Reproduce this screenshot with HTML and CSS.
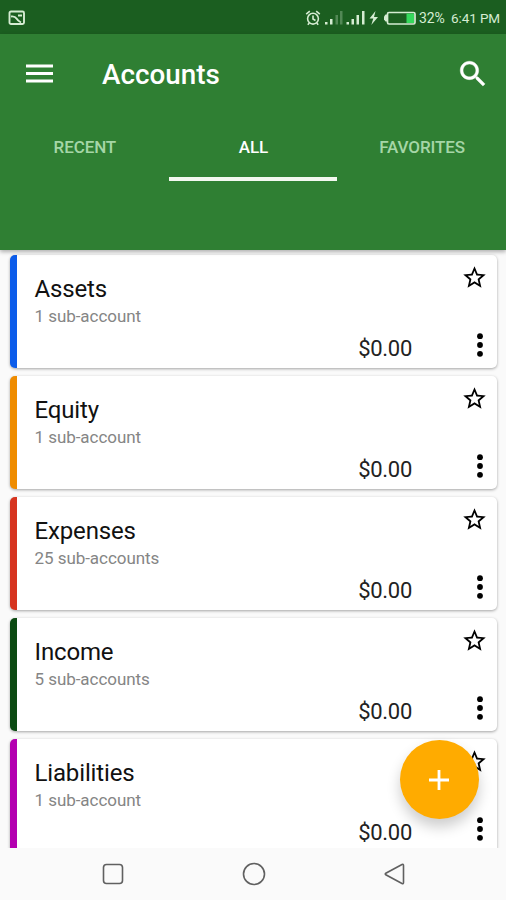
FILE: index.html
```
<!DOCTYPE html>
<html lang="en">
<head>
    <meta charset="UTF-8">
    <title>Accounts</title>
    <link rel="stylesheet" href="styles.css">
</head>
<body>
    <svg width="0" height="0" class="defs">
        <symbol id="star" viewBox="0 0 24 24">
            <path d="M22 9.24l-7.19-.62L12 2 9.19 8.63 2 9.24l5.46 4.73L5.82 21 12 17.27 18.18 21l-1.63-7.03L22 9.24zM12 15.4l-3.76 2.27 1-4.28-3.32-2.88 4.38-.38L12 6.1l1.71 4.04 4.38.38-3.32 2.88 1 4.28L12 15.4z"/>
        </symbol>
        <symbol id="more" viewBox="0 0 8 24">
            <circle cx="4" cy="3.2" r="2.9"/>
            <circle cx="4" cy="12" r="2.9"/>
            <circle cx="4" cy="20.8" r="2.9"/>
        </symbol>
    </svg>
    <div class="screen">
        <div class="statusbar">
            <svg class="shot" width="18" height="16" viewBox="0 0 18 16">
                <rect x="1.5" y="1.5" width="14.5" height="12.500" rx="1.5" fill="none" stroke="#d5ecd2" stroke-width="1.9"/>
                <path d="M3 6.500Q7 6 8.500 8.500T13 12.500M10 5.500h4" fill="none" stroke="#d5ecd2" stroke-width="1.900"/>
            </svg>
            <svg class="indicators" width="114" height="18" viewBox="0 0 114 18">
                <g fill="none" stroke="#d5ecd2" stroke-width="1.6">
                    <circle cx="8" cy="9.700" r="5.400"/>
                    <path d="M8 6.500v3.500l2.500 1.500M1.200 5.200l3.600-3M14.800 5.200l-3.600-3M4.300 14l-1.500 1.800M11.700 14l1.500 1.800"/>
                </g>
                <g fill="#d5ecd2">
                    <path d="M20 13h2.500v2.500H20zM25 10h2.500v5.500H25zM41.500 13H44v2.500h-2.500zM46.500 10H49v5.500h-2.500zM51.500 6H54v9.500h-2.500zM57 2h2.500v13.500H57z"/>
                    <path d="M30.500 6H33v9.500h-2.500zM35 2h2.500v13.500H35z" opacity=".3"/>
                    <path d="M70.500 2l-6 7.500h3.800l-2 6.500 6.700-8h-4z"/>
                    <path d="M82 5.500h-1.500L79 7.500v3l1.500 2H82z"/>
                </g>
                <rect x="82.500" y="3.500" width="27.500" height="11.500" rx="1.500" fill="none" stroke="#d5ecd2" stroke-width="1.700"/>
                <path d="M101.500 4.500h7.500v9.500h-7.500z" fill="#35d95c"/>
            </svg>
            <span class="battery">32%</span>
            <span class="time">6:41 PM</span>
        </div>
        <header class="appbar">
            <div class="toolbar">
                <svg class="menu" width="27" height="20" viewBox="0 0 27 20">
                    <path d="M0 .5h27v3H0zM0 8h27v3H0zM0 15.500h27v3H0z" fill="#fff"/>
                </svg>
                <h1>Accounts</h1>
                <svg class="search" width="34" height="34" viewBox="0 0 24 24">
                    <path fill="#fff" stroke="#fff" stroke-width=".3" d="M15.500 14h-.79l-.28-.27C15.410 12.590 16 11.110 16 9.500 16 5.910 13.090 3 9.500 3S3 5.910 3 9.500 5.910 16 9.500 16c1.610 0 3.090-.59 4.230-1.570l.27.28v.79l5 4.990L20.490 19l-4.990-5zm-6 0C7.010 14 5 11.990 5 9.500S7.010 5 9.500 5 14 7.010 14 9.500 11.990 14 9.500 14z"/>
                </svg>
            </div>
            <nav class="tabs">
                <a class="tab">RECENT</a>
                <a class="tab on">ALL</a>
                <a class="tab">FAVORITES</a>
            </nav>
        </header>
        <main class="list">
            <div class="card assets">
                <div class="info"><h2>Assets</h2><p>1 sub-account</p></div>
                <span class="balance">$0.00</span>
                <div class="actions"><svg class="star"><use href="#star"/></svg><svg class="more"><use href="#more"/></svg></div>
            </div>
            <div class="card equity">
                <div class="info"><h2>Equity</h2><p>1 sub-account</p></div>
                <span class="balance">$0.00</span>
                <div class="actions"><svg class="star"><use href="#star"/></svg><svg class="more"><use href="#more"/></svg></div>
            </div>
            <div class="card expenses">
                <div class="info"><h2>Expenses</h2><p>25 sub-accounts</p></div>
                <span class="balance">$0.00</span>
                <div class="actions"><svg class="star"><use href="#star"/></svg><svg class="more"><use href="#more"/></svg></div>
            </div>
            <div class="card income">
                <div class="info"><h2>Income</h2><p>5 sub-accounts</p></div>
                <span class="balance">$0.00</span>
                <div class="actions"><svg class="star"><use href="#star"/></svg><svg class="more"><use href="#more"/></svg></div>
            </div>
            <div class="card liabilities">
                <div class="info"><h2>Liabilities</h2><p>1 sub-account</p></div>
                <span class="balance">$0.00</span>
                <div class="actions"><svg class="star"><use href="#star"/></svg><svg class="more"><use href="#more"/></svg></div>
            </div>
            <div class="fab">
                <svg width="20" height="20" viewBox="0 0 20 20"><path d="M10 0v20M0 10h20" stroke="#fff" stroke-width="2.800"/></svg>
            </div>
        </main>
        <footer class="navbar">
            <svg width="24" height="24" viewBox="0 0 24 24"><rect x="2.500" y="2.500" width="19" height="19" rx="3"/></svg>
            <svg width="24" height="24" viewBox="0 0 24 24"><circle cx="12" cy="12" r="10.500"/></svg>
            <svg width="24" height="24" viewBox="0 0 24 24"><path d="M19 2.500Q20.500 1.800 20.500 3.500v17Q20.500 22.200 19 21.500L2.800 12.800Q1.700 12 2.800 11.200z"/></svg>
        </footer>
    </div>
</body>
</html>
```
FILE: styles.css
```
* {
    margin: 0; padding: 0; box-sizing: border-box;
}
body {
    font-family: Roboto, "Liberation Sans", sans-serif; background: #fafafa;
}
svg { display: block; flex: none; }
.defs { position: absolute; }
.screen {
    width: 506px; height: 900px; display: flex; flex-direction: column; overflow: hidden;
}
/* status bar */
.statusbar {
    height: 34px; flex: none; display: flex; align-items: center; background: #1b5e20; color: #d5ecd2; font-size: 13px; padding: 2px 6px 0 8px;
}
.indicators { margin-left: auto; }
.battery { font-size: 14px; width: 32px; letter-spacing: -.1px; }
.time { width: 49px; font-size: 13.5px; letter-spacing: -.1px; white-space: nowrap; }
/* app bar */
.appbar {
    height: 216px; flex: none; background: #2f7f33; color: #fff; position: relative; z-index: 1; box-shadow: 0 2px 4px rgba(0,0,0,.3);
}
.toolbar {
    height: 79px; display: flex; align-items: center; padding: 0 16px 0 26px;
}
.toolbar h1 {
    font-size: 27.8px; font-weight: 500; margin: 2px auto 0 49px;
}
.tabs { display: flex; height: 68px; }
.tab {
    flex: 1; text-align: center; line-height: 68px; font-size: 17px; font-weight: 500; letter-spacing: -.1px; padding-left: 1px; color: #a5d6a7;
}
.tab.on { color: #fff; border-bottom: 4px solid #f3f8f0; }
/* accounts */
.list {
    height: 598px; flex: none; overflow: hidden; padding: 5px 9px 0 10px; display: flex; flex-direction: column; gap: 8px; position: relative;
}
.card {
    height: 113px; flex: none; display: flex; background: #fff; border-left: 7px solid; border-radius: 5px; box-shadow: 0 1px 3px rgba(0,0,0,.35); padding-right: 9px;
}
.assets { border-color: #0b5cea; }
.equity { border-color: #ef8c00; }
.expenses { border-color: #d6341f; }
.income { border-color: #0b4a12; }
.liabilities { border-color: #b400b0; }
.info { flex: 1; padding: 20px 0 0 17.5px; }
.info h2 { font-size: 24px; line-height: 28px; font-weight: 400; letter-spacing: -.15px; color: #111; }
.info p { font-size: 17px; line-height: 22px; margin-top: 2px; letter-spacing: -.05px; color: #858585; }
.balance { font-size: 22px; line-height: 26px; letter-spacing: -.3px; color: #222; align-self: flex-end; margin-bottom: 6px; }
.actions {
    width: 76px; display: flex; flex-direction: column; align-items: flex-end; justify-content: space-between; padding: 9px 0 11px;
}
.star { width: 27px; height: 27px; }
.more { width: 8px; height: 24px; margin-right: 4px; }
.fab {
    position: absolute; left: 399.5px; top: 490px; width: 79px; height: 79px; border-radius: 50%; background: #ffab00; display: flex; align-items: center; justify-content: center; box-shadow: 0 8px 14px rgba(0,0,0,.2);
}
/* system navigation */
.navbar {
    flex: 1; display: flex; align-items: center; justify-content: center; gap: 117px; padding-left: 1px; background: #fafafa;
}
.navbar svg { fill: none; stroke: #606060; stroke-width: 1.6; }
```
